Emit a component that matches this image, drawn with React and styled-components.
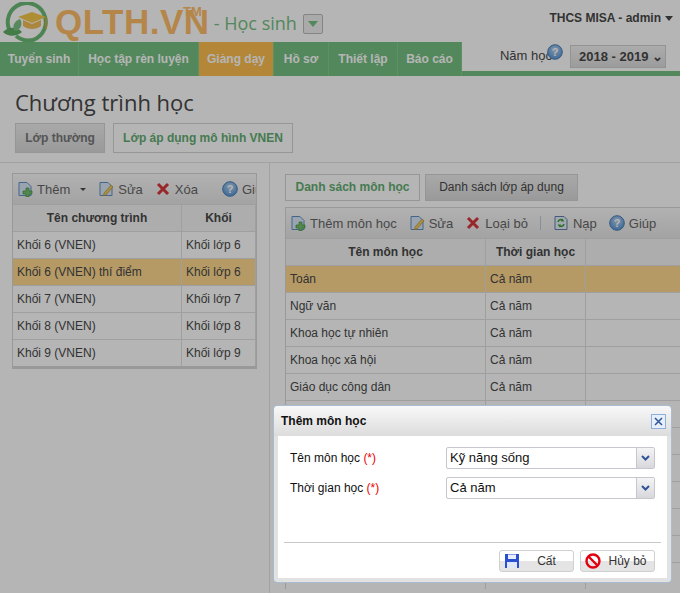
import React from "react";
import styled, { createGlobalStyle } from "styled-components";

const GlobalStyle = createGlobalStyle`
  html, body { margin: 0; padding: 0; height: 100%; overflow: hidden; background: #fff; }
  body { font-family: "Liberation Sans", Arial, sans-serif; font-size: 12px; color: #484848; }
  * { box-sizing: border-box; }
`;

const Page = styled.div`
  position: relative;
  width: 680px;
  height: 593px;
  overflow: hidden;
  background: #fff;
`;

const Mask = styled.div`
  position: absolute;
  inset: 0;
  background: rgba(0, 0, 0, 0.29);
`;

/* header */
const Header = styled.header`
  height: 42px;
  display: flex;
  align-items: flex-start;
  justify-content: space-between;
`;

const Brand = styled.div`
  display: flex;
  align-items: flex-start;
  padding: 2px 0 0 2px;
`;

const LogoText = styled.div`
  font: bold 35px/40px "Liberation Sans", Arial, sans-serif;
  color: #ffbd68;
  margin-left: 3px;
  letter-spacing: 0.5px;
  width: 127px;
  white-space: nowrap;
`;

const Tm = styled.sup`
  font: bold 13px/13px "Liberation Sans", Arial, sans-serif;
  color: #ffbd68;
  margin: 3px 0 0 1px;
`;

const Module = styled.div`
  font: 18px/22px "Open Sans", sans-serif;
  color: #74c082;
  margin: 10px 0 0 12px;
  white-space: nowrap;
`;

const ModuleDrop = styled.div`
  width: 20px;
  height: 20px;
  margin: 12px 0 0 6px;
  border: 1px solid #bbb;
  border-radius: 2px;
  background: #f0f0f0;
  display: flex;
  align-items: center;
  justify-content: center;
  &::after {
    content: "";
    border-left: 5px solid transparent;
    border-right: 5px solid transparent;
    border-top: 6px solid #74c082;
  }
`;

const User = styled.div`
  font-weight: bold;
  font-size: 12px;
  color: #484848;
  margin: 11px 7px 0 0;
  white-space: nowrap;
  display: flex;
  align-items: center;
  gap: 4px;
  &::after {
    content: "";
    border-left: 4px solid transparent;
    border-right: 4px solid transparent;
    border-top: 5px solid #484848;
  }
`;

const NavBar = styled.nav`
  height: 34px;
  display: flex;
  justify-content: space-between;
  border-bottom: 5px solid #74c082;
`;

const NavTabs = styled.div`
  display: flex;
  height: 34px;
  background: #74c082;
`;

const NavTab = styled.div`
  width: ${(p) => p.$w}px;
  height: 34px;
  line-height: 34px;
  text-align: center;
  font-weight: bold;
  font-size: 12px;
  color: #fff;
  background: ${(p) => (p.$active ? "#fcbd50" : "#74c082")};
  border-right: 1px solid #82cc8c;
`;

const Year = styled.div`
  display: flex;
  align-items: flex-start;
  padding: 2px 14px 0 0;
  height: 29px;
`;

const YearLabel = styled.span`
  font-size: 13px;
  line-height: 24px;
  margin-right: -5px;
`;

const YearBox = styled.div`
  width: 96px;
  height: 23px;
  margin-left: 7px;
  margin-top: 1px;
  border: 1px solid #d0d0d0;
  background: linear-gradient(#f2f2f2, #dcdcdc);
  font-weight: bold;
  font-size: 13px;
  line-height: 21px;
  padding-left: 8px;
  white-space: nowrap;
`;

/* title */
const TitleBlock = styled.section`
  height: 87px;
  border-bottom: 1px solid #e4e4e4;
  padding: 12px 15px 0;
`;

const Title = styled.h1`
  margin: 0;
  font: 400 22px/29px "Open Sans", sans-serif;
  color: #484848;
`;

const TabRow = styled.div`
  display: flex;
  gap: ${(p) => p.$gap}px;
`;

const TitleTabs = styled(TabRow)`
  margin-top: 6px;
`;

const TabButton = styled.div`
  height: ${(p) => p.$h}px;
  width: ${(p) => p.$w}px;
  line-height: ${(p) => p.$h - 2}px;
  text-align: center;
  font-size: 12px;
  border: 1px solid #d4d4d4;
  font-weight: ${(p) => (p.$soft ? "normal" : "bold")};
  color: ${(p) => (p.$on ? "#63ad72" : p.$soft ? "#484848" : "#777")};
  background: ${(p) => (p.$on ? "#fff" : "linear-gradient(#eee, #d9d9d9)")};
`;

/* panels */
const Body = styled.div`
  display: flex;
  height: 430px;
`;

const LeftPane = styled.aside`
  width: 270px;
  flex: none;
  border-right: 1px solid #e4e4e4;
  padding: 10px 12px 0;
`;

const RightPane = styled.main`
  flex: 1;
  min-width: 0;
  padding: 11px 0 0 15px;
  overflow: hidden;
`;

const Grid = styled.div`
  border: 1px solid #d8d8d8;
  border-width: ${(p) => (p.$open ? "1px 0 0 1px" : "1px 1px 3px 1px")};
  width: ${(p) => p.$w}px;
`;

const RightGrid = styled(Grid)`
  margin-top: 6px;
`;

const Toolbar = styled.div`
  height: ${(p) => p.$h}px;
  display: flex;
  align-items: center;
  gap: ${(p) => p.$gap}px;
  padding-left: 4px;
  background: linear-gradient(#fafafa, #e6e6e6);
  white-space: nowrap;
  overflow: hidden;
`;

const ToolButton = styled.div`
  display: flex;
  align-items: center;
  gap: 4px;
  font-size: 13px;
  color: #666;
  & > svg { flex: none; }
`;

const Caret = styled.span`
  margin-left: 6px;
  border-left: 3px solid transparent;
  border-right: 3px solid transparent;
  border-top: 3px solid #484848;
`;

const ToolSep = styled.span`
  width: 1px;
  height: 14px;
  background: #b5cde6;
`;

const Row = styled.div`
  display: flex;
  height: 27px;
  border-top: 1px solid #e0e0e0;
  background: ${(p) => (p.$selected ? "#ffd990" : "#fff")};
`;

const HeadRow = styled(Row)`
  background: #f4f4f4;
  font-weight: bold;
`;

const Cell = styled.div`
  width: ${(p) => p.$w}px;
  flex: none;
  line-height: 26px;
  padding-left: 4px;
  border-right: 1px solid #e0e0e0;
  white-space: nowrap;
  overflow: hidden;
`;

const HeadCell = styled(Cell)`
  text-align: center;
  padding-left: 0;
`;

/* dialog */
const Dialog = styled.div`
  position: absolute;
  left: 273px;
  top: 405px;
  width: 399px;
  height: 178px;
  display: flex;
  flex-direction: column;
  padding: 0 4px 4px;
  border: 1px solid #a9bcd2;
  border-radius: 4px;
  background: linear-gradient(#f8f8f8 0, #dcdcdc 30px, #e2e2e2 31px);
`;

const DialogHead = styled.div`
  height: 30px;
  flex: none;
  display: flex;
  align-items: center;
  justify-content: space-between;
  padding-left: 3px;
  font-weight: bold;
  font-size: 12px;
  color: #111;
`;

const CloseButton = styled.div`
  width: 15px;
  height: 15px;
  margin-right: 1px;
  border: 1px solid #8fb0dc;
  background: #e6effb;
  display: flex;
  align-items: center;
  justify-content: center;
`;

const DialogBody = styled.div`
  flex: 1;
  background: #fff;
  padding: 11px 12px 0;
  display: flex;
  flex-direction: column;
  gap: 9px;
  color: #111;
`;

const Field = styled.div`
  display: flex;
  align-items: center;
  height: 21px;
`;

const FieldLabel = styled.label`
  width: 156px;
  flex: none;
  font-size: 12px;
`;

const Required = styled.span`
  color: #e00;
`;

const Combo = styled.div`
  width: 210px;
  height: 22px;
  display: flex;
  border: 1px solid #c6c6ce;
  border-radius: 2px;
  font-size: 13px;
  line-height: 20px;
  padding-left: 3px;
  justify-content: space-between;
`;

const ComboArrow = styled.div`
  width: 18px;
  height: 20px;
  flex: none;
  border-left: 1px solid #c6c6ce;
  background: linear-gradient(#f4f4f6, #d8d8dc);
  display: flex;
  align-items: center;
  justify-content: center;
`;

const DialogFoot = styled.div`
  margin-top: auto;
  margin-left: -6px;
  margin-right: -6px;
  border-top: 1px solid #c8c8c8;
  height: 36px;
  display: flex;
  justify-content: flex-end;
  gap: 6px;
  padding: 7px 6px 0 0;
`;

const DialogButton = styled.div`
  width: 75px;
  height: 22px;
  display: flex;
  align-items: center;
  padding-left: 4px;
  border: 1px solid #d0d0d0;
  border-radius: 3px;
  background: linear-gradient(#fff 50%, #e4e4e4 50%);
  font-size: 12px;
  color: #333;
`;

const ButtonText = styled.span`
  flex: 1;
  text-align: center;
`;

/* drawings */
const Logo = () => (
  <svg width="50" height="40" viewBox="0 0 50 40">
    <path d="M10 32 A19 19 0 1 1 31 38 A20 20 0 0 1 14 34" fill="none" stroke="#6dbb76" strokeWidth="4" />
    <path d="M1 30 C6 25 14 24 20 30 C14 35 6 35 1 30Z" fill="#5fae68" />
    <path d="M12 28 C10 23 13 19 18 17 C21 22 19 26 15 29Z" fill="#7cc283" />
    <path d="M16 15 L30 10 L44 15 L30 21Z" fill="#f5c84a" />
    <path d="M21 18 V24 C26 28 34 28 39 24 V18 L30 22Z" fill="#f0bd5a" />
    <path d="M44 15 V27" stroke="#e0a93c" strokeWidth="1.5" />
  </svg>
);

const DocBase = () => (
  <path d="M2 1.5H10L14 5.5V14.5H2Z" fill="#d8e8f8" stroke="#5f8fc0" />
);

const AddIcon = () => (
  <svg width="16" height="16" viewBox="0 0 16 16">
    <DocBase />
    <path d="M9 7h3v3h3v3h-3v3H9v-3H6v-3h3z" fill="#76c26a" stroke="#3f8f3f" strokeWidth="0.7" />
  </svg>
);

const EditIcon = () => (
  <svg width="16" height="16" viewBox="0 0 16 16">
    <DocBase />
    <path d="M6 12L13 4l2 1.8L8 14l-2.5.6z" fill="#eec85c" stroke="#b08a2c" strokeWidth="0.6" />
  </svg>
);

const DeleteIcon = () => (
  <svg width="16" height="16" viewBox="0 0 16 16">
    <path d="M3 3L13 13M13 3L3 13" stroke="#d8383c" strokeWidth="3" />
  </svg>
);

const ReloadIcon = () => (
  <svg width="16" height="16" viewBox="0 0 16 16">
    <path d="M2 1.5H11L14 4.5V14.5H2Z" fill="#e8eef8" stroke="#5f7fb0" />
    <path d="M5 7a3 3 0 0 1 5-1.5M11 9a3 3 0 0 1-5 1.5" fill="none" stroke="#3f9f3f" strokeWidth="1.6" />
    <path d="M9 3.5L11.5 6.5H8zM7 12.5L4.5 9.5H8z" fill="#3f9f3f" />
  </svg>
);

const HelpIcon = ({ size = 16 }) => (
  <svg width={size} height={size} viewBox="0 0 16 16">
    <defs>
      <radialGradient id="helpBall" cx="50%" cy="35%" r="70%">
        <stop offset="0" stopColor="#b7d4f2" />
        <stop offset="1" stopColor="#4f8fd0" />
      </radialGradient>
    </defs>
    <circle cx="8" cy="8" r="7.3" fill="url(#helpBall)" stroke="#4a7fb8" />
    <text x="8" y="12" textAnchor="middle" fontSize="11" fontWeight="bold" fontFamily="Liberation Sans" fill="#fff">?</text>
  </svg>
);

const ArrowDown = () => (
  <svg width="9" height="6" viewBox="0 0 9 6">
    <path d="M1 1L4.5 4.5L8 1" fill="none" stroke="#2f5597" strokeWidth="2" />
  </svg>
);

const SaveIcon = () => (
  <svg width="16" height="16" viewBox="0 0 16 16">
    <path d="M1 1H15V15H1Z" fill="#2a4fd0" />
    <path d="M4 1.5H12V6H4Z" fill="#e8eefc" />
    <path d="M3 9H13V15H3Z" fill="#dfe6f8" />
  </svg>
);

const CancelIcon = () => (
  <svg width="16" height="16" viewBox="0 0 16 16">
    <circle cx="8" cy="8" r="6.5" fill="none" stroke="#e00010" strokeWidth="2.4" />
    <path d="M3.5 3.5L12.5 12.5" stroke="#e00010" strokeWidth="2.4" />
  </svg>
);

const NAV = [
  ["Tuyển sinh", 79],
  ["Học tập rèn luyện", 120],
  ["Giảng dạy", 75, true],
  ["Hồ sơ", 55],
  ["Thiết lập", 69],
  ["Báo cáo", 64],
];

const PROGRAMS = [
  ["Khối 6 (VNEN)", "Khối lớp 6"],
  ["Khối 6 (VNEN) thí điểm", "Khối lớp 6", true],
  ["Khối 7 (VNEN)", "Khối lớp 7"],
  ["Khối 8 (VNEN)", "Khối lớp 8"],
  ["Khối 9 (VNEN)", "Khối lớp 9"],
];

const SUBJECTS = [
  ["Toán", "Cả năm", true],
  ["Ngữ văn", "Cả năm"],
  ["Khoa học tự nhiên", "Cả năm"],
  ["Khoa học xã hội", "Cả năm"],
  ["Giáo dục công dân", "Cả năm"],
  ["", ""],
  ["", ""],
  ["", ""],
  ["", ""],
  ["", ""],
  ["", ""],
  ["", ""],
];

export default function App() {
  return (
    <Page>
      <GlobalStyle />
      <Header>
        <Brand>
          <Logo />
          <LogoText>QLTH.VN</LogoText>
          <Tm>TM</Tm>
          <Module>- Học sinh</Module>
          <ModuleDrop />
        </Brand>
        <User>THCS MISA - admin</User>
      </Header>
      <NavBar>
        <NavTabs>
          {NAV.map(([label, w, active]) => (
            <NavTab key={label} $w={w} $active={active}>{label}</NavTab>
          ))}
        </NavTabs>
        <Year>
          <YearLabel>Năm học</YearLabel>
          <HelpIcon />
          <YearBox>2018 - 2019 ⌄</YearBox>
        </Year>
      </NavBar>
      <TitleBlock>
        <Title>Chương trình học</Title>
        <TitleTabs $gap={8}>
          <TabButton $w={90} $h={30}>Lớp thường</TabButton>
          <TabButton $w={180} $h={30} $on>Lớp áp dụng mô hình VNEN</TabButton>
        </TitleTabs>
      </TitleBlock>
      <Body>
        <LeftPane>
          <Grid $w={245}>
            <Toolbar $h={30} $gap={12}>
              <ToolButton><AddIcon />Thêm<Caret /></ToolButton>
              <ToolButton><EditIcon />Sửa</ToolButton>
              <ToolButton><DeleteIcon />Xóa</ToolButton>
              <ToolSep />
              <ToolButton><HelpIcon />Giúp</ToolButton>
            </Toolbar>
            <HeadRow>
              <HeadCell $w={169}>Tên chương trình</HeadCell>
              <HeadCell $w={74}>Khối</HeadCell>
            </HeadRow>
            {PROGRAMS.map(([name, grade, selected]) => (
              <Row key={name} $selected={selected}>
                <Cell $w={169}>{name}</Cell>
                <Cell $w={74}>{grade}</Cell>
              </Row>
            ))}
          </Grid>
        </LeftPane>
        <RightPane>
          <TabRow $gap={5}>
            <TabButton $w={135} $h={27} $on>Danh sách môn học</TabButton>
            <TabButton $w={153} $h={27} $soft>Danh sách lớp áp dụng</TabButton>
          </TabRow>
          <RightGrid $w={395} $open>
            <Toolbar $h={30} $gap={12}>
              <ToolButton><AddIcon />Thêm môn học</ToolButton>
              <ToolButton><EditIcon />Sửa</ToolButton>
              <ToolButton><DeleteIcon />Loại bỏ</ToolButton>
              <ToolSep />
              <ToolButton><ReloadIcon />Nạp</ToolButton>
              <ToolButton><HelpIcon />Giúp</ToolButton>
            </Toolbar>
            <HeadRow>
              <HeadCell $w={200}>Tên môn học</HeadCell>
              <HeadCell $w={100}>Thời gian học</HeadCell>
            </HeadRow>
            {SUBJECTS.map(([name, time, selected], i) => (
              <Row key={i} $selected={selected}>
                <Cell $w={200}>{name}</Cell>
                <Cell $w={100}>{time}</Cell>
              </Row>
            ))}
          </RightGrid>
        </RightPane>
      </Body>
      <Mask />
      <Dialog>
        <DialogHead>
          Thêm môn học
          <CloseButton>
            <svg width="9" height="9" viewBox="0 0 9 9">
              <path d="M1 1L8 8M8 1L1 8" stroke="#2f5597" strokeWidth="1.5" />
            </svg>
          </CloseButton>
        </DialogHead>
        <DialogBody>
          <Field>
            <FieldLabel>Tên môn học <Required>(*)</Required></FieldLabel>
            <Combo>Kỹ năng sống<ComboArrow><ArrowDown /></ComboArrow></Combo>
          </Field>
          <Field>
            <FieldLabel>Thời gian học <Required>(*)</Required></FieldLabel>
            <Combo>Cả năm<ComboArrow><ArrowDown /></ComboArrow></Combo>
          </Field>
          <DialogFoot>
            <DialogButton><SaveIcon /><ButtonText>Cất</ButtonText></DialogButton>
            <DialogButton><CancelIcon /><ButtonText>Hủy bỏ</ButtonText></DialogButton>
          </DialogFoot>
        </DialogBody>
      </Dialog>
    </Page>
  );
}
